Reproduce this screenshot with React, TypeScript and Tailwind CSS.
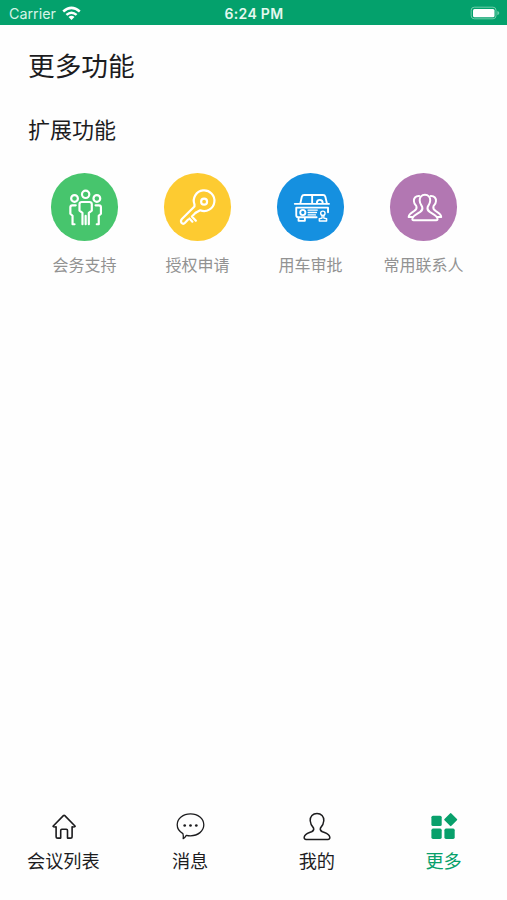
import type { ReactNode } from 'react'

interface Feature {
  label: string
  color: string
  icon: ReactNode
}

interface Tab {
  label: string
  icon: ReactNode
}

const features: Feature[] = [
  {
    label: '会务支持',
    color: 'bg-[#47c56d]',
    icon: (
      <>
        <circle cx="35.5" cy="21.9" r="3.7" />
        <circle cx="24.3" cy="26" r="3.4" />
        <circle cx="46.8" cy="26" r="3.4" />
        <path d="M32.3 52v-11.5l-3-2.2v-6.5a2.2 2.2 0 0 1 2.2-2.2h8a2.2 2.2 0 0 1 2.2 2.2v6.5l-3 2.2V52M35.5 43.5V52" />
        <path d="M25.5 33h-3.4a2 2 0 0 0-2 2v6.5l2.2 2V52h2M45.5 33h3.4a2 2 0 0 1 2 2v6.5l-2.2 2V52h-2" />
      </>
    ),
  },
  {
    label: '授权申请',
    color: 'bg-[#fdcb31]',
    icon: (
      <>
        <path d="M32.5 40.5l4.6-2.6a10.4 10.4 0 1 0-5.8-5.9v2.2L18.6 46.8q-1.6 1.8-.4 3.8 1.8 1.8 3.6 0l3.1-3.3" />
        <circle cx="41" cy="29.3" r="3" />
        <path d="M32.5 40.5l-3.8 3.7 4 4.3M26.2 46.2l3 3.2" />
      </>
    ),
  },
  {
    label: '用车审批',
    color: 'bg-[#1590e0]',
    icon: (
      <g strokeWidth="1.9">
        <path d="M18.5 31.5h5.5l1.6-7.1q.5-1.8 2.4-1.8h19q1.8 0 2.3 1.8l1.7 7.1h2M24 31.5h27M36 22.7v8.5M40.7 31q0-3.5 3-3.5t3 3.5" />
        <path d="M40.5 45H22q-2 0-2-2v-7.7h32v4.7M22.3 45v3.6h6.4v-3.6" />
        <circle cx="26.6" cy="40.2" r="2.6" />
        <path strokeWidth="1.3" d="M31.8 37.7h9.4M32 40.2h8.4M32 42.6h7.4" />
        <circle cx="46.8" cy="41" r="2.2" strokeWidth="1.4" />
        <path strokeWidth="1.4" d="M46 43.3v2.5l-2.8.7v2.3h7.4v-2.3l-2.8-.7v-2.5" />
      </g>
    ),
  },
  {
    label: '常用联系人',
    color: 'bg-[#b277b2]',
    icon: (
      <g strokeWidth="2">
        <path d="M35.8 22.4c-3.3 0-5.5 2.4-5.3 5.8.1 2.9 1.5 4.4 2.5 6.2.8 2.3-.3 4-2 5.2-3.8 2.5-7.4 3.6-7.9 6.8-.2 1 .4 1.6 1.2 1.6h23c.8 0 1.4-.6 1.2-1.6-.5-3.2-4.1-4.3-7.9-6.8-1.7-1.2-2.8-2.9-2-5.2 1-1.8 2.4-3.3 2.5-6.2.2-3.4-2-5.8-5.3-5.8z" />
        <path d="M30 23.6c-3.9-.2-5.6 2.3-5.3 5.3.2 2.7 1.5 3.5 2.5 5 .7 2.3-.2 3.5-2.1 4.7-3.1 1.8-5.5 2.7-5.7 6.2h3.8M41.6 23.6c3.9-.2 5.6 2.3 5.3 5.3-.2 2.7-1.5 3.5-2.5 5-.7 2.3.2 3.5 2.1 4.7 3.1 1.8 5.5 2.7 5.7 6.2h-3.8" />
      </g>
    ),
  },
]

const tabs: Tab[] = [
  {
    label: '会议列表',
    icon: (
      <path
        strokeWidth="1.6"
        d="M5 15.2L15.4 4.6q.7-.7 1.4 0l10.4 10.6q-.3.9-3.1.7v9.5q0 1.7-1.7 1.7h-2.9v-7.6q0-1.2-1.2-1.2h-4.4q-1.2 0-1.2 1.2v7.6H9.8q-1.7 0-1.7-1.7v-9.5q-2.8.2-3.1-.7z"
      />
    ),
  },
  {
    label: '消息',
    icon: (
      <>
        <path strokeWidth="1.3" d="M15.5 2.8c7.5 0 13.3 4.8 13.3 11s-5.8 11-13.3 11q-2.2 0-4.2-.5-1.5 2.5-3.1 3.3.5-2.3-.3-5C4.4 20.7 2.2 17.3 2.2 13.8c0-6.2 5.8-11 13.3-11z" />
        <g fill="currentColor" stroke="none">
          <circle cx="9.7" cy="14.5" r="1.35" />
          <circle cx="15.5" cy="14.5" r="1.35" />
          <circle cx="21.3" cy="14.5" r="1.35" />
        </g>
      </>
    ),
  },
  {
    label: '我的',
    icon: (
      <path
        strokeWidth="1.5"
        d="M16 2.4c-4.2 0-7.1 3-6.8 7.4.2 3.3 1.4 5.3 3.4 7.3.6 2-.3 2.8-2 3.6-3.2 1.4-6.5 1.6-7.4 5.4-.3 1.5.6 2.3 1.9 2.3h21.8c1.3 0 2.2-.8 1.9-2.3-.9-3.8-4.2-4-7.4-5.4-1.7-.8-2.6-1.6-2-3.6 2-2 3.2-4 3.4-7.3.3-4.4-2.6-7.4-6.8-7.4z"
      />
    ),
  },
  {
    label: '更多',
    icon: (
      <g fill="currentColor" stroke="none">
        <rect x="3.4" y="4.7" width="10.3" height="10.3" rx="1.6" />
        <rect x="3.4" y="17.6" width="10.3" height="10.3" rx="1.6" />
        <rect x="16.4" y="17.6" width="10.3" height="10.3" rx="1.6" />
        <rect x="17.8" y="3.7" width="9.8" height="9.8" rx="1" transform="rotate(45 22.7 8.6)" />
      </g>
    ),
  },
]

function StatusBar() {
  return (
    <header className="grid h-[25px] grid-cols-3 items-center bg-[#04a16c] pl-[9px] pr-[7px] pt-[2px] font-['Inter','Liberation_Sans',sans-serif] text-white">
      <div className="flex items-center gap-[6px]">
        <span className="text-[14.3px] leading-5 text-[#d5f3e7]">Carrier</span>
        <svg className="h-[15px] w-[19px]" viewBox="0 0 19 15" fill="none" stroke="currentColor" strokeWidth="2.5">
          <path d="M1.2 5.5q8.3-7.2 16.6 0M4.4 8.9q5.1-4.4 10.2 0" />
          <path d="M6.5 11.1q3-2.5 6 0l-3 3z" fill="currentColor" stroke="none" />
        </svg>
      </div>
      <span className="-ml-px text-center text-[14px] font-semibold leading-5 tracking-[0.3px] text-[#e4f8f0]">6:24 PM</span>
      <svg className="h-[15px] w-[30px] justify-self-end" viewBox="0 0 30 15" fill="none">
        <rect x="1.2" y="1.2" width="24.8" height="11.6" rx="3" stroke="#6fceaa" />
        <rect x="3" y="3" width="21.5" height="8.2" rx="1.5" fill="#fff" />
        <path d="M27.3 5q2 .7 2 2.1t-2 2.1z" fill="#6fceaa" />
      </svg>
    </header>
  )
}

export default function App() {
  return (
    <div className="flex h-screen w-full flex-col overflow-hidden bg-[#fefefe] font-['Noto_Sans_CJK_SC',sans-serif] text-[#1c1c1e]">
      <StatusBar />

      <main className="flex-1">
        <h1 className="ml-7 mt-5 text-[26.7px] leading-10">更多功能</h1>
        <h2 className="ml-7 mt-[27px] text-[22px] leading-8">扩展功能</h2>

        <div className="ml-7 mr-[27px] mt-[29px] grid grid-cols-4">
          {features.map((f) => (
            <div key={f.label} className="flex flex-col items-center">
              <div className={`h-[67.5px] w-[67.5px] rounded-full ${f.color}`}>
                <svg className="h-full w-full text-white" viewBox="0.6 0.4 68 68" fill="none" stroke="currentColor" strokeWidth="2.2" strokeLinecap="round" strokeLinejoin="round">
                  {f.icon}
                </svg>
              </div>
              <span className="mt-[11px] text-[16px] leading-6 text-[#929292]">{f.label}</span>
            </div>
          ))}
        </div>
      </main>

      {/* Bottom tabs, the last one is active */}
      <nav className="grid h-[93px] grid-cols-4">
        {tabs.map((tab, i) => (
          <div
            key={tab.label}
            className={`flex flex-col items-center pt-1 ${i === tabs.length - 1 ? 'text-[#08a06b]' : 'text-[#1c1c1e]'}`}
          >
            <svg className="h-[31px] w-[31px]" viewBox="0 0 31 31" fill="none" stroke="currentColor" strokeLinecap="round" strokeLinejoin="round">
              {tab.icon}
            </svg>
            <span className="mt-1 text-[18.2px] leading-7">{tab.label}</span>
          </div>
        ))}
      </nav>
    </div>
  )
}
